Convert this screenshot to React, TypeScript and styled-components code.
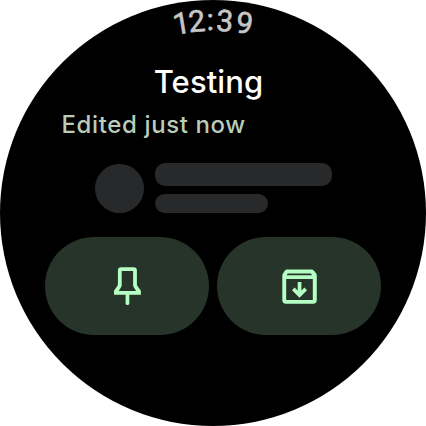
import React from "react";
import styled, { createGlobalStyle } from "styled-components";

const GlobalStyle = createGlobalStyle`
  *, *::before, *::after { box-sizing: border-box; }
  body { margin: 0; background: #fff; overflow: hidden; }
  h1, p { margin: 0; }
`;

const WatchFace = styled.main`
  display: flex;
  flex-direction: column;
  width: 426px;
  height: 426px;
  overflow: hidden;
  border-radius: 50%;
  background: #000;
  color: #fff;
  font-family: Inter, Roboto, sans-serif;
`;

const Clock = styled.time`
  display: grid;
  flex: none;
  height: 62px;
  justify-content: center;
  color: #c7c6c6;
  font-family: Roboto, sans-serif;
  font-size: 30px;
  line-height: 36px;
  -webkit-text-stroke: 0.6px currentColor;
`;

/* Every glyph turns about the centre of the round display. */
const ClockGlyph = styled.span<{ $angle: number; $lift?: number }>`
  grid-area: 1 / 1;
  width: 24px;
  height: 36px;
  margin-top: ${({ $lift = 0 }) => 3 - $lift}px;
  text-align: center;
  transform-origin: 50% ${({ $lift = 0 }) => 210 + $lift}px;
  transform: rotate(${({ $angle }) => $angle}deg);
`;

const Title = styled.h1`
  flex: none;
  height: 44px;
  padding-right: 9px;
  font-size: 31px;
  font-weight: 500;
  line-height: 40px;
  letter-spacing: 0.1px;
  text-align: center;
`;

const Edited = styled.p`
  flex: none;
  height: 57px;
  padding-left: 61.5px;
  color: #b9ccb9;
  font-size: 24px;
  font-weight: 500;
  line-height: 38px;
  letter-spacing: 0.62px;
`;

const Placeholder = styled.div`
  display: flex;
  flex: none;
  align-items: flex-end;
  gap: 11px;
  height: 50px;
  margin-left: 95px;
`;

const Avatar = styled.div`
  width: 49px;
  height: 49px;
  border-radius: 50%;
  background: #28292b;
`;

const Lines = styled.div`
  display: flex;
  flex-direction: column;
  gap: 8px;
`;

const Line = styled.div<{ $width: number; $height: number }>`
  width: ${({ $width }) => $width}px;
  height: ${({ $height }) => $height}px;
  border-radius: 10px;
  background: #28292b;
`;

const Actions = styled.div`
  display: flex;
  flex: none;
  justify-content: center;
  gap: 8px;
  margin-top: 24px;
`;

const ActionButton = styled.button`
  display: grid;
  place-items: center;
  width: 164px;
  height: 98px;
  padding: 0;
  border: 0;
  border-radius: 49px;
  background: #263429;
  color: #b6ffc4;
`;

const Icon = styled.svg`
  display: block;
  width: 48px;
  height: 48px;
`;

const glyphs = [
  { text: "1", angle: -9.5 },
  { text: "2", angle: -4.8 },
  { text: ":", angle: -0.8, lift: 1 },
  { text: "3", angle: 3.5 },
  { text: "9", angle: 9.4 },
];

export default function App() {
  return (
    <>
      <GlobalStyle />
      <WatchFace>
        <Clock>
          {glyphs.map(({ text, angle, lift }) => (
            <ClockGlyph key={text} $angle={angle} $lift={lift}>
              {text}
            </ClockGlyph>
          ))}
        </Clock>
        <Title>Testing</Title>
        <Edited>Edited just now</Edited>
        <Placeholder>
          <Avatar />
          <Lines>
            <Line $width={177} $height={23} />
            <Line $width={113} $height={19} />
          </Lines>
        </Placeholder>
        <Actions>
          <ActionButton aria-label="Pin">
            <Icon viewBox="0 0 48 48" fill="currentColor">
              <path
                fillRule="evenodd"
                d="M18.2 5.3H30.6q3.3 0 3.3 3.3V22q0 1.2.6 2.1l3.4 4.7V32.7H11v-3.9l3.3-4.7q.6-.9.6-2.1V8.6q0-3.3 3.3-3.3zM18.7 9.1V23q0 1.4-.8 2.6l-2.2 3.3H33.1l-2.2-3.3q-.8-1.2-.8-2.6V9.1z"
              />
              <path d="M22.6 32h3.7v9.2a1.85 1.85 0 0 1-3.7 0z" />
            </Icon>
          </ActionButton>
          <ActionButton aria-label="Archive">
            <Icon viewBox="0 0 48 48" fill="currentColor">
              <path
                fillRule="evenodd"
                d="M12 7.4H36.2q1.6 0 2.6 1.2l2 2.5q1 1.2 1 2.8V38q0 3.7-3.7 3.7H11q-3.7 0-3.7-3.7V13.9q0-1.6 1-2.8l1.6-2.5q.8-1.2 2.1-1.2zM12.8 11.5L11.6 13.2H37.2L35.7 11.5zM11.2 17V37.9H37.8V17z"
              />
              <path d="M22.7 20h3.7v8.6l3.1-3 2.5 2.6-7.5 7.6-7.5-7.6 2.5-2.6 3.2 3z" />
            </Icon>
          </ActionButton>
        </Actions>
      </WatchFace>
    </>
  );
}
